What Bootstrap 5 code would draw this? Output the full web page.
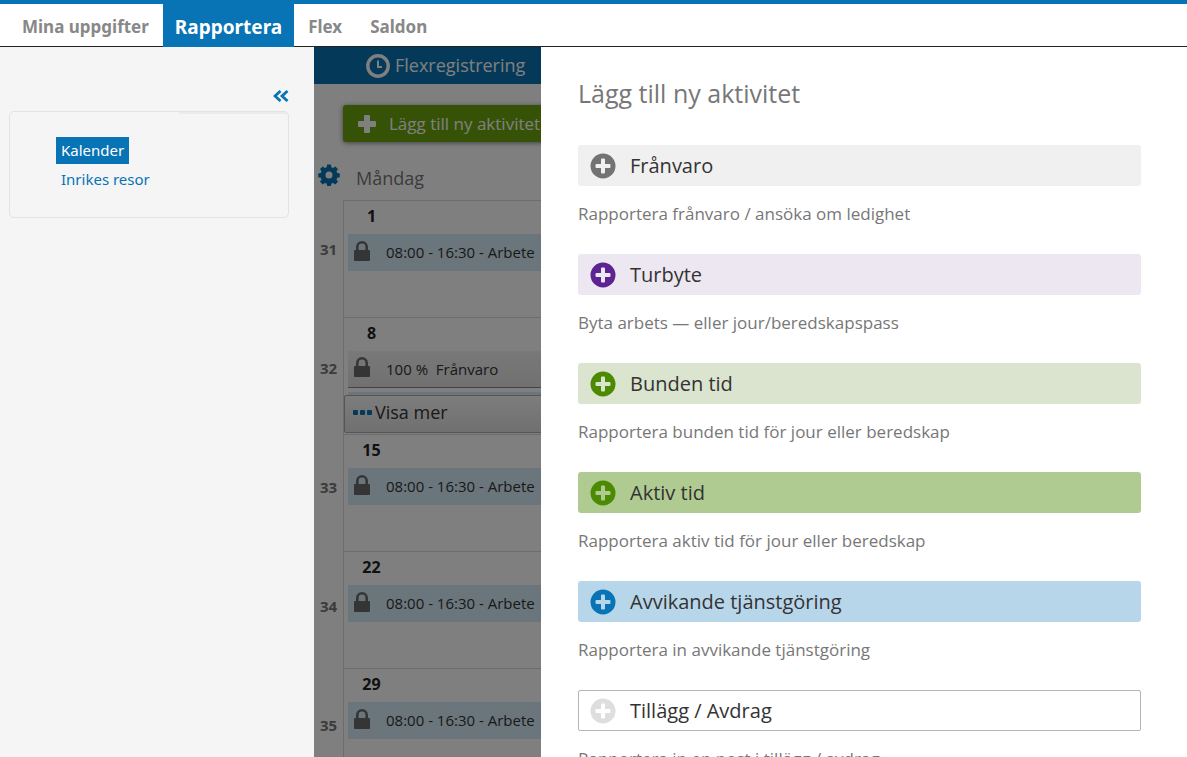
<!DOCTYPE html>
<html lang="sv">
<head>
<meta charset="utf-8">
<meta name="viewport" content="width=device-width, initial-scale=1">
<title>Rapportera</title>
<link href="https://cdn.jsdelivr.net/npm/bootstrap@5.3.0/dist/css/bootstrap.min.css" rel="stylesheet">
<style>
  :root { --brand: #0873b5; }
  body { font-family: "Open Sans", sans-serif; color: #333; background: #fff; }
  a { text-decoration: none; }

  /* Top navigation */
  .top-nav { border-top: 4px solid var(--brand); border-bottom: 1px solid #222; height: 47px; padding-left: 8px; font-family: "Noto Sans", sans-serif; }
  .top-nav .nav-link { color: #888; font-weight: 700; font-size: 17px; line-height: 42px; padding: 2px 14px 0; height: 42px; }
  .top-nav .nav-link.active { background: var(--brand); color: #fff; font-size: 19px; height: 43px; padding: 2px 12px 0; }

  /* Side menu */
  .side-menu { flex: 0 0 314px; background: #f5f5f5; padding: 39px 25px 0 9px; font-family: "Noto Sans", sans-serif; font-size: 15px; }
  .collapse-btn { color: var(--brand); line-height: 1; height: 16px; }
  .menu-box { border: 1px solid #e3e3e3; border-radius: 5px; height: 107px; margin-top: 9px; padding: 25px 46px; gap: 2px; position: relative; }
  .menu-box::after { content: ""; position: absolute; top: 0; right: 0; width: 109px; height: 100%; border-top: 2px solid #ebebeb; border-radius: 0 4px 0 0; pointer-events: none; }
  .menu-box a { color: var(--brand); padding: 0 5px; line-height: 27px; }
  .menu-box a.active { background: var(--brand); color: #fff; }

  /* Calendar under the dimming layer */
  .calendar { flex: 0 0 227px; }
  .scrim { background: rgba(0, 0, 0, .5); }
  .cal-inner { width: 420px; }
  .flex-bar { background: #0873b5; color: #fff; height: 37px; padding-left: 52px; font-size: 18px; gap: 5px; }
  .add-btn { background: #6da50c; color: #fff; border: 0; border-radius: 3px; height: 37px; width: 350px; margin: 21px 0 0 29px; padding: 0 14px; gap: 12px; font-size: 17px; box-shadow: 0 1px 5px rgba(0, 0, 0, .5); }
  .cal-head { height: 24px; margin-top: 24px; padding-left: 4px; gap: 16px; font-size: 18px; color: #777; }
  .cal-head svg { margin-bottom: 6px; }
  .week-col { width: 29px; }
  .week-no { height: 119px; font-size: 15px; font-weight: 700; color: #777; }
  .day-col { padding-top: 10px; }
  .day { height: 117px; border: solid #d8d8d8; border-width: 1px 0 0 1px; padding-left: 4px; }
  .day-no { width: 47px; height: 33px; font-size: 16px; line-height: 30px; font-weight: 700; color: #222; }
  .shift { height: 37px; background: #d5edf9; font-size: 15px; padding-left: 6px; gap: 16px; color: #333; }
  .shift svg { margin-bottom: 4px; }
  .shift.absence { background: linear-gradient(#f2f2f2, #e2e2e2); border-bottom: 1px solid #888; }
  .next-shift { height: 3px; margin-top: 4px; background: #d5edf9; }
  .more-btn { height: 38px; margin-left: -4px; border: 1px solid #aaa; border-radius: 2px; background: linear-gradient(#fafafa, #e0e0e0); font-size: 18px; padding: 0 8px 3px; gap: 3px; color: #333; }

  /* Drawer with activity types */
  .drawer { padding: 29px 46px 0 37px; color: #777; background: #fff; }
  .drawer h1 { font-size: 25px; line-height: 34px; margin: 0 0 35px; font-weight: 400; color: #777; }
  .type-btn { height: 41px; border: 0; border-radius: 3px; padding: 0 12px; gap: 14px; font-size: 20px; color: #333; }
  .drawer p { font-size: 17px; line-height: 24px; margin: 16px 0 28px; }
  .type-absence { background: #f0f0f0; } .type-absence svg { color: #737373; }
  .type-swap { background: #ede7f2; } .type-swap svg { color: #5c2492; }
  .type-bound { background: #dae4cf; } .type-bound svg { color: #4c8a02; }
  .type-active { background: #afcb92; } .type-active svg { color: #4c8a02; }
  .type-deviating { background: #b8d6ea; } .type-deviating svg { color: #0873b5; }
  .type-extra { background: #fff; border: 1px solid #b5b5b5; border-radius: 2px; padding: 0 11px; } .type-extra svg { color: #dedede; }
</style>
</head>
<body>
<svg class="d-none" aria-hidden="true">
  <symbol id="plus-circle" viewBox="0 0 26 26">
    <path fill="currentColor" fill-rule="evenodd" d="M13 .5a12.500 12.500 0 1 0 0 25a12.500 12.500 0 1 0 0-25zM12 5.500h2q1 0 1 1V11h4.500q1 0 1 1v2q0 1-1 1H15v4.500q0 1-1 1h-2q-1 0-1-1V15H6.500q-1 0-1-1v-2q0-1 1-1H11V6.500q0-1 1-1z"/>
  </symbol>
  <symbol id="lock" viewBox="0 0 16 20">
    <path fill="none" stroke="#6b6b6b" stroke-width="2.600" d="M3.300 10V6a4.700 4.700 0 0 1 9.400 0v4"/>
    <rect y="9" width="16" height="11" rx="1" fill="#6b6b6b"/>
  </symbol>
</svg>

<div class="vh-100 d-flex flex-column overflow-hidden">
  <nav class="top-nav nav flex-nowrap flex-shrink-0">
    <a class="nav-link" href="#">Mina uppgifter</a>
    <a class="nav-link active" href="#" aria-current="page">Rapportera</a>
    <a class="nav-link" href="#">Flex</a>
    <a class="nav-link" href="#">Saldon</a>
  </nav>

  <div class="d-flex flex-grow-1 overflow-hidden">
    <aside class="side-menu">
      <div class="d-flex justify-content-end">
        <button type="button" class="collapse-btn btn p-0 border-0" aria-label="Dölj meny">
          <svg width="16" height="12" viewBox="0 0 16 12" fill="none" stroke="currentColor" stroke-width="2.800"><path d="M7.500 1L2 6l5.500 5M14.500 1L9 6l5.500 5"/></svg>
        </button>
      </div>
      <div class="menu-box d-flex flex-column align-items-start">
        <a class="active" href="#">Kalender</a>
        <a href="#">Inrikes resor</a>
      </div>
    </aside>

    <section class="calendar position-relative overflow-hidden">
      <div class="cal-inner">
        <div class="flex-bar d-flex align-items-center">
          <svg width="24" height="24" viewBox="0 0 24 24" fill="none" stroke="#fff"><circle cx="12" cy="12" r="10.200" stroke-width="3.400"/><path d="M12 6.500V13h4" stroke-width="2"/></svg>
          <span>Flexregistrering</span>
        </div>
        <button type="button" class="add-btn d-flex align-items-center">
          <svg width="20" height="20" viewBox="0 0 20 20" fill="#fff"><path d="M8 1h4q1 0 1 1v5h5q1 0 1 1v4q0 1-1 1h-5v5q0 1-1 1H8q-1 0-1-1v-5H2q-1 0-1-1V8q0-1 1-1h5V2q0-1 1-1z"/></svg>
          <span>Lägg till ny aktivitet</span>
        </button>
        <div class="cal-head d-flex align-items-center">
          <svg width="22" height="22" viewBox="-11 -11 22 22" fill="#0873b5"><path fill-rule="evenodd" d="M-1.900-10.400h3.800l.5 2.600 1.700.7 2.200-1.500 2.700 2.700-1.500 2.200.7 1.700 2.600.5v3.800l-2.600.5-.7 1.700L9 6.700 6.300 9.400 4.100 7.900l-1.700.7-.5 2.300h-3.800l-.5-2.300-1.700-.7-2.200 1.500L-9 6.700l1.500-2.200-.7-1.700-2.600-.5v-3.800l2.600-.5.7-1.700L-9-5.900l2.700-2.700 2.200 1.500 1.700-.7zM0-3.400a3.500 3.500 0 1 0 0 7a3.500 3.500 0 1 0 0-7z"/></svg>
          <span>Måndag</span>
        </div>
        <div class="d-flex">
          <div class="week-col">
            <div class="week-no d-flex align-items-center justify-content-center">31</div>
            <div class="week-no d-flex align-items-center justify-content-center">32</div>
            <div class="week-no d-flex align-items-center justify-content-center">33</div>
            <div class="week-no d-flex align-items-center justify-content-center">34</div>
            <div class="week-no d-flex align-items-center justify-content-center">35</div>
          </div>
          <div class="day-col flex-grow-1">
            <div class="day">
              <div class="day-no text-center">1</div>
              <div class="shift d-flex align-items-center"><svg width="16" height="20"><use href="#lock"/></svg><span>08:00 - 16:30 - Arbete</span></div>
            </div>
            <div class="day">
              <div class="day-no text-center">8</div>
              <div class="shift absence d-flex align-items-center"><svg width="16" height="20"><use href="#lock"/></svg><span>100 %&nbsp; Frånvaro</span></div>
              <div class="next-shift"></div>
              <button type="button" class="more-btn d-flex align-items-center w-100">
                <svg width="19" height="5" viewBox="0 0 19 5" fill="#0873b5"><rect width="5" height="5" rx="1"/><rect x="7" width="5" height="5" rx="1"/><rect x="14" width="5" height="5" rx="1"/></svg>
                <span>Visa mer</span>
              </button>
            </div>
            <div class="day">
              <div class="day-no text-center">15</div>
              <div class="shift d-flex align-items-center"><svg width="16" height="20"><use href="#lock"/></svg><span>08:00 - 16:30 - Arbete</span></div>
            </div>
            <div class="day">
              <div class="day-no text-center">22</div>
              <div class="shift d-flex align-items-center"><svg width="16" height="20"><use href="#lock"/></svg><span>08:00 - 16:30 - Arbete</span></div>
            </div>
            <div class="day">
              <div class="day-no text-center">29</div>
              <div class="shift d-flex align-items-center"><svg width="16" height="20"><use href="#lock"/></svg><span>08:00 - 16:30 - Arbete</span></div>
            </div>
          </div>
        </div>
      </div>
      <div class="scrim position-absolute top-0 start-0 w-100 h-100"></div>
    </section>

    <main class="drawer flex-grow-1">
      <h1>Lägg till ny aktivitet</h1>
      <button type="button" class="type-btn type-absence d-flex align-items-center w-100"><svg width="26" height="26"><use href="#plus-circle"/></svg><span>Frånvaro</span></button>
      <p>Rapportera frånvaro / ansöka om ledighet</p>
      <button type="button" class="type-btn type-swap d-flex align-items-center w-100"><svg width="26" height="26"><use href="#plus-circle"/></svg><span>Turbyte</span></button>
      <p>Byta arbets — eller jour/beredskapspass</p>
      <button type="button" class="type-btn type-bound d-flex align-items-center w-100"><svg width="26" height="26"><use href="#plus-circle"/></svg><span>Bunden tid</span></button>
      <p>Rapportera bunden tid för jour eller beredskap</p>
      <button type="button" class="type-btn type-active d-flex align-items-center w-100"><svg width="26" height="26"><use href="#plus-circle"/></svg><span>Aktiv tid</span></button>
      <p>Rapportera aktiv tid för jour eller beredskap</p>
      <button type="button" class="type-btn type-deviating d-flex align-items-center w-100"><svg width="26" height="26"><use href="#plus-circle"/></svg><span>Avvikande tjänstgöring</span></button>
      <p>Rapportera in avvikande tjänstgöring</p>
      <button type="button" class="type-btn type-extra d-flex align-items-center w-100"><svg width="26" height="26"><use href="#plus-circle"/></svg><span>Tillägg / Avdrag</span></button>
      <p>Rapportera in en post i tillägg / avdrag</p>
    </main>
  </div>
</div>
<script src="https://cdn.jsdelivr.net/npm/bootstrap@5.3.0/dist/js/bootstrap.bundle.min.js"></script>
</body>
</html>
